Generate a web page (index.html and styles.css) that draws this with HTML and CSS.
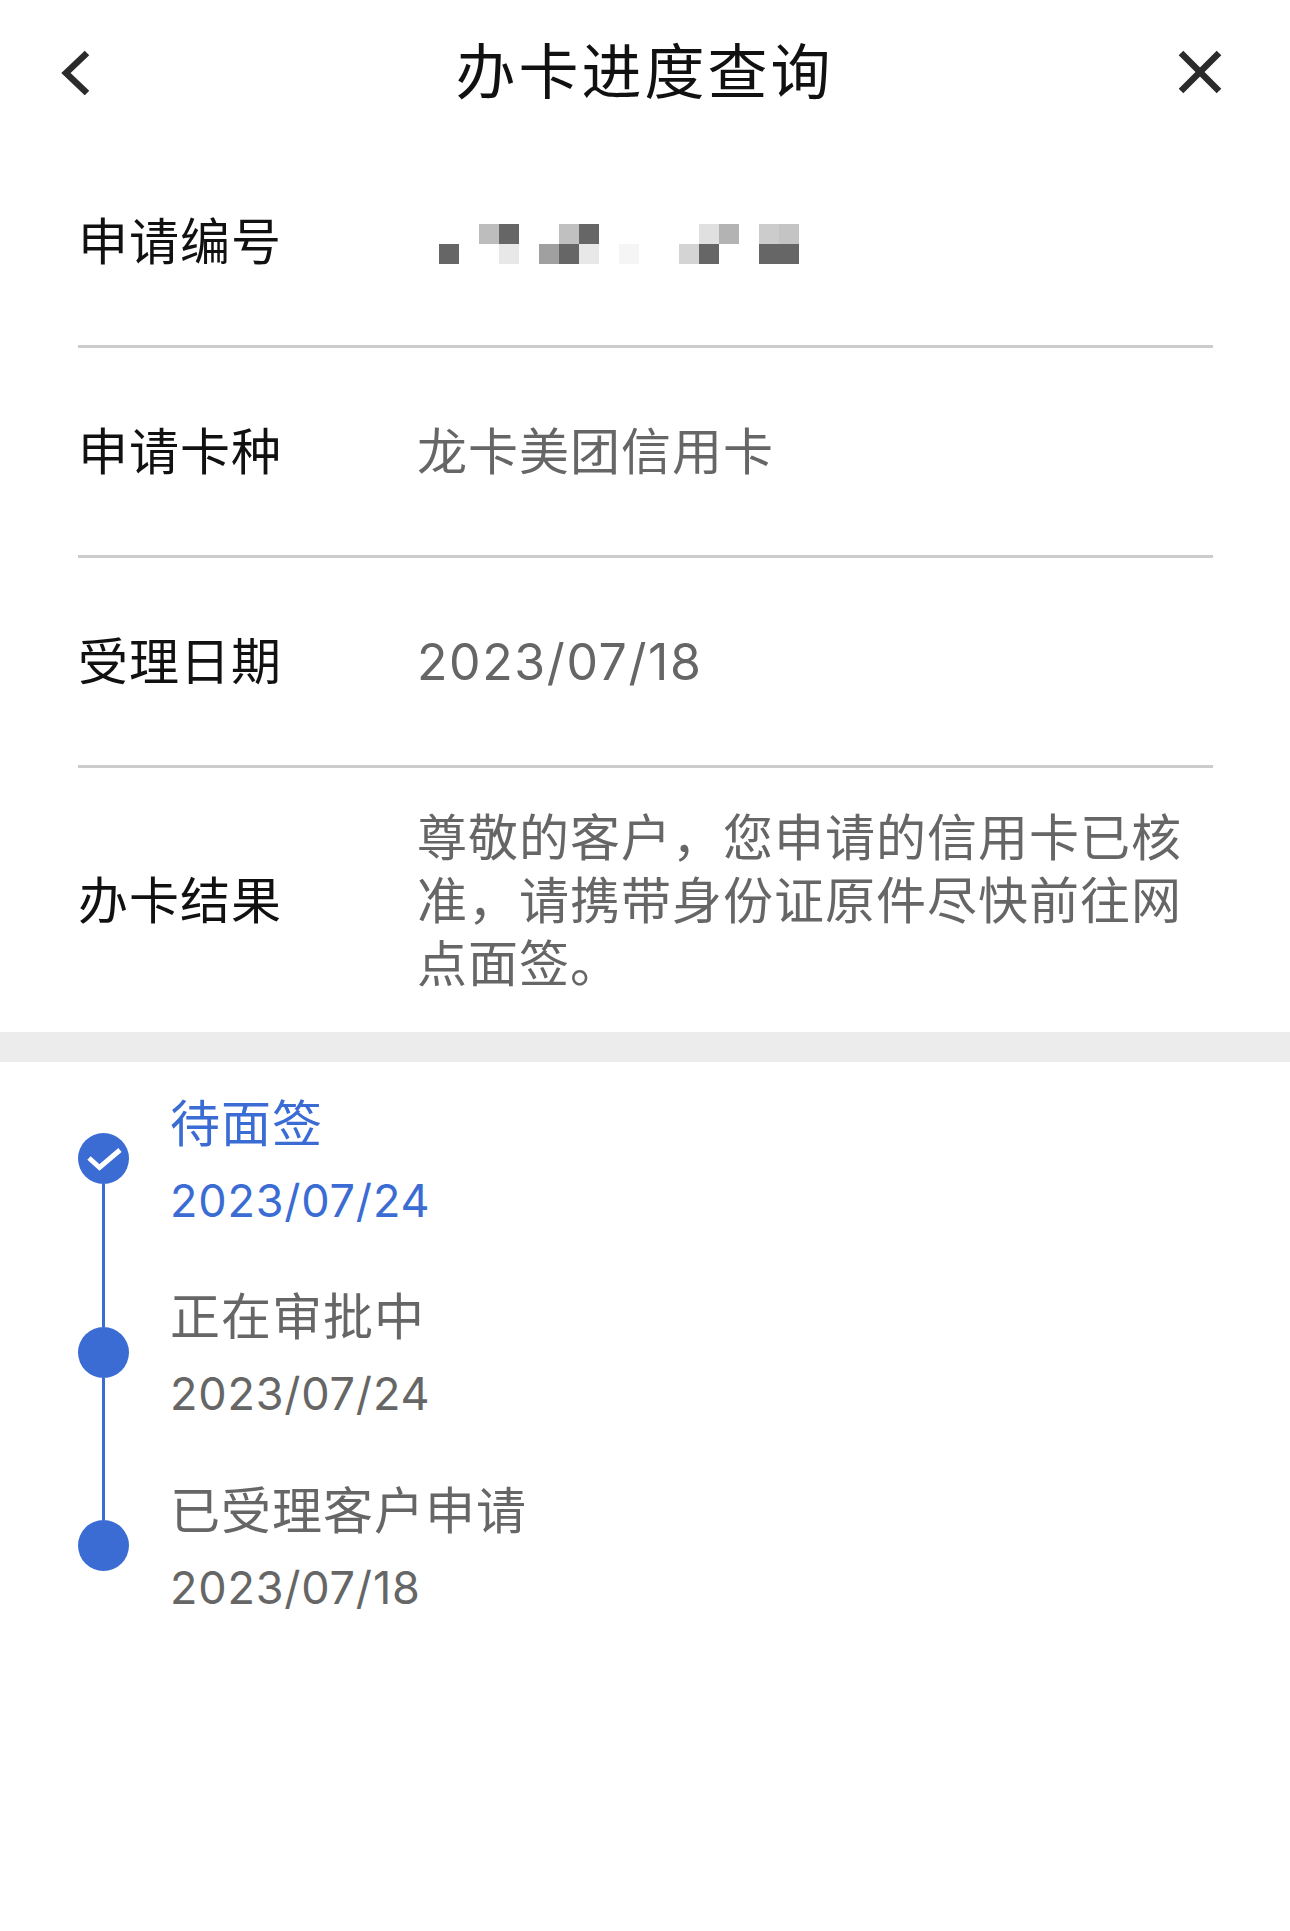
FILE: index.html
```html
<!DOCTYPE html>
<html lang="zh-CN">

<head>
    <meta charset="UTF-8">
    <meta name="viewport" content="width=device-width, initial-scale=1.0">
    <title>办卡进度查询</title>
    <link rel="stylesheet" href="styles.css">
</head>

<body>

    <header class="topbar">
        <svg class="back" width="30" height="46" viewBox="0 0 30 46">
            <path d="M26 4 L5 24 L26 44" />
        </svg>
        <h1>办卡进度查询</h1>
        <svg class="close" width="46" height="46" viewBox="0 0 46 46">
            <path d="M3 4 L41 42 M41 4 L3 42" />
        </svg>
    </header>

    <main>
        <div class="info">
            <div class="row">
                <span class="label">申请编号</span>
                <!-- number is pixelated in the original -->
                <svg class="masked" width="382" height="40" viewBox="0 0 382 40">
                    <rect x="22" y="20" width="20" height="20" fill="#666" />
                    <rect x="62" y="0" width="20" height="20" fill="#bdbdbd" />
                    <rect x="82" y="0" width="20" height="20" fill="#666" />
                    <rect x="82" y="20" width="20" height="20" fill="#e8e8e8" />
                    <rect x="122" y="20" width="20" height="20" fill="#a0a0a0" />
                    <rect x="142" y="0" width="20" height="20" fill="#c0c0c0" />
                    <rect x="142" y="20" width="20" height="20" fill="#666" />
                    <rect x="162" y="0" width="20" height="20" fill="#666" />
                    <rect x="162" y="20" width="20" height="20" fill="#e8e8e8" />
                    <rect x="202" y="20" width="20" height="20" fill="#f5f5f5" />
                    <rect x="262" y="20" width="20" height="20" fill="#d4d4d4" />
                    <rect x="282" y="0" width="20" height="20" fill="#e0e0e0" />
                    <rect x="282" y="20" width="20" height="20" fill="#666" />
                    <rect x="302" y="0" width="20" height="20" fill="#b3b3b3" />
                    <rect x="342" y="0" width="20" height="20" fill="#ccc" />
                    <rect x="342" y="20" width="20" height="20" fill="#666" />
                    <rect x="362" y="0" width="20" height="20" fill="#c4c4c4" />
                    <rect x="362" y="20" width="20" height="20" fill="#666" />
                </svg>
            </div>
            <div class="row">
                <span class="label">申请卡种</span>
                <span class="value">龙卡美团信用卡</span>
            </div>
            <div class="row">
                <span class="label">受理日期</span>
                <span class="value date">2023/07/18</span>
            </div>
            <div class="row result">
                <span class="label">办卡结果</span>
                <span class="value">尊敬的客户，您申请的信用卡已核准，请携带身份证原件尽快前往网点面签。</span>
            </div>
        </div>

        <div class="band"></div>

        <div class="timeline">
            <div class="step current">
                <div class="marker">
                    <span class="line none"></span>
                    <span class="dot">
                        <svg width="51" height="51" viewBox="0 0 51 51">
                            <path d="M11 25 L21.500 34.500 L42 17" />
                        </svg>
                    </span>
                    <span class="line"></span>
                </div>
                <div class="text">
                    <div class="name">待面签</div>
                    <div class="when">2023/07/24</div>
                </div>
            </div>
            <div class="step">
                <div class="marker">
                    <span class="line"></span>
                    <span class="dot"></span>
                    <span class="line"></span>
                </div>
                <div class="text">
                    <div class="name">正在审批中</div>
                    <div class="when">2023/07/24</div>
                </div>
            </div>
            <div class="step">
                <div class="marker">
                    <span class="line"></span>
                    <span class="dot"></span>
                    <span class="line none"></span>
                </div>
                <div class="text">
                    <div class="name">已受理客户申请</div>
                    <div class="when">2023/07/18</div>
                </div>
            </div>
        </div>
    </main>

</body>

</html>
```

FILE: styles.css
```css
body {
    margin: 0;
    background-color: #ffffff;
    color: #666666;
    font-family: Inter, "Noto Sans CJK SC", sans-serif;
}

.topbar {
    display: grid;
    grid-template-columns: 1fr auto 1fr;
    align-items: center;
    height: 132px;
    padding: 6px 66px 0 61px;
}

.topbar h1 {
    margin: 0 0 0 4px;
    font-size: 60px;
    font-weight: 400;
    letter-spacing: 3px;
    line-height: 70px;
    color: #111111;
}

.topbar svg path {
    fill: none;
    stroke: #2b2b2b;
    stroke-width: 6.5;
}

.close {
    justify-self: end;
}

.info {
    margin: 0 77px 0 78px;
}

.row {
    display: flex;
    align-items: center;
    height: 207px;
    border-bottom: 3px solid #cccccc;
}

.row.result {
    height: 264px;
    border-bottom: none;
}

.label {
    flex: 0 0 339px;
    padding-top: 2px;
    font-size: 50px;
    line-height: 63px;
    letter-spacing: 1px;
    color: #111111;
}

.value {
    padding-top: 2px;
    font-size: 50px;
    line-height: 63px;
    letter-spacing: 1px;
    width: 780px;
}

.value.date {
    letter-spacing: 1.6px;
}

.masked {
    margin-top: 4px;
}

.band {
    height: 30px;
    background-color: #ececec;
}

.timeline {
    padding-left: 78px;
}

.step {
    display: flex;
    align-items: center;
    height: 193.5px;
}

.marker {
    display: flex;
    flex-direction: column;
    align-items: center;
    align-self: stretch;
    width: 51px;
    margin-right: 41px;
}

.line {
    flex: 1;
    width: 3px;
    background-color: #3b6cd4;
}

.line.none {
    background: none;
}

.dot {
    width: 51px;
    height: 51px;
    border-radius: 50%;
    background-color: #3b6cd4;
}

.dot svg {
    display: block;
}

.dot svg path {
    fill: none;
    stroke: #ffffff;
    stroke-width: 5;
}

.text {
    padding-top: 6px;
}

.name {
    font-size: 50px;
    line-height: 78px;
    letter-spacing: 1px;
}

.when {
    font-size: 45px;
    line-height: 76px;
    letter-spacing: 0.8px;
}

.current .text {
    color: #3b6cd4;
}
```
